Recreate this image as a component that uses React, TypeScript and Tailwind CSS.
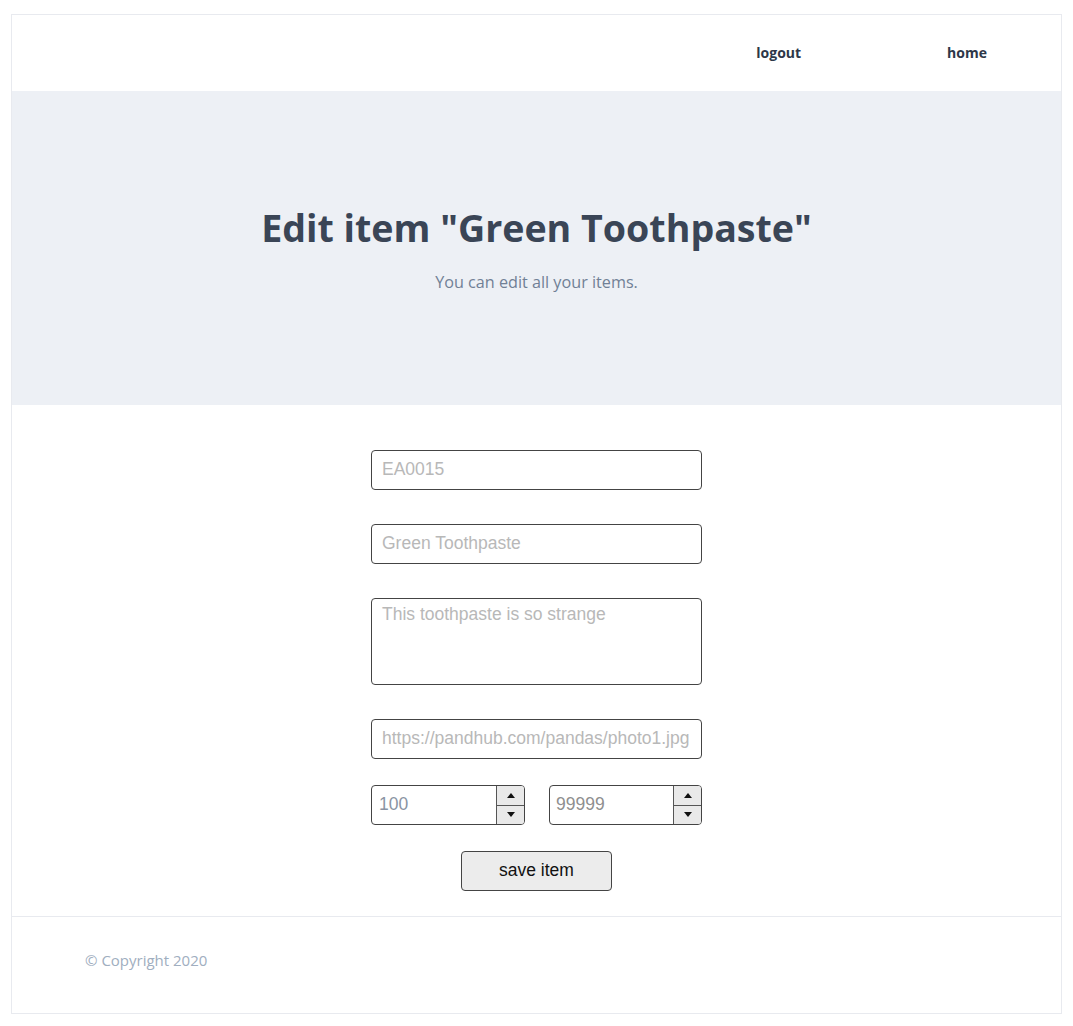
import React from "react";

function Spin() {
  return (
    <div className="flex w-[28px] flex-col border-l border-[#555] bg-[#e9e9e9]">
      <div className="flex flex-1 items-center justify-center border-b border-[#555]">
        <svg width="8" height="5" viewBox="0 0 8 5"><path d="M0 5 L4 0 L8 5 Z" fill="#111" /></svg>
      </div>
      <div className="flex flex-1 items-center justify-center">
        <svg width="8" height="5" viewBox="0 0 8 5"><path d="M0 0 L4 5 L8 0 Z" fill="#111" /></svg>
      </div>
    </div>
  );
}

export default function App() {
  const inputCls =
    "h-[40px] w-full rounded-[4px] border border-[#444] bg-white pl-[10px] pr-[4px] pb-[2px] text-[17.5px] text-[#333] placeholder:text-[#b8b8b8] outline-none";
  const arial = { fontFamily: '"Liberation Sans", Arial, sans-serif' };
  return (
    <div className="bg-white px-[11px] pb-[11px] pt-[14px]" style={{ fontFamily: '"Open Sans", sans-serif' }}>
      <div className="flex flex-col border border-[#e8eaef]">
        <header className="flex h-[76px] items-center justify-end pr-[74px]">
          <nav className="-mt-[2px] flex items-center gap-[146px] text-[14px] font-bold text-[#2d3748]">
            <a className="ml-[2px]">logout</a>
            <a>home</a>
          </nav>
        </header>
        <section className="flex h-[314px] flex-col items-center justify-center bg-[#edf0f5] pt-[4px]">
          <h1 className="text-[37.6px] font-bold leading-[44px] text-[#3a4556]">Edit item "Green Toothpaste"</h1>
          <p className="mt-[20px] text-[16.2px] text-[#718096]">You can edit all your items.</p>
        </section>
        <main className="flex flex-col items-center pb-[25px] pt-[45px]" style={arial}>
          <div className="flex w-[331px] flex-col">
            <input className={inputCls} placeholder="EA0015" style={arial} />
            <input className={inputCls + " mt-[34px]"} placeholder="Green Toothpaste" style={arial} />
            <textarea
              className="mt-[34px] h-[87px] w-full resize-none rounded-[4px] border border-[#444] bg-white px-[10px] pt-[4px] text-[17.5px] leading-[22px] text-[#333] outline-none placeholder:text-[#b8b8b8]"
              placeholder="This toothpaste is so strange"
              style={arial}
            />
            <input className={inputCls + " mt-[34px]"} placeholder="https://pandhub.com/pandas/photo1.jpg" style={arial} />
            <div className="mt-[26px] flex justify-between">
              <div className="flex h-[40px] w-[154px] overflow-hidden rounded-[4px] border border-[#444] bg-white">
                <div className="flex flex-1 items-center pb-[2px] pl-[7px] text-[17.5px] text-[#8a94a3]">100</div>
                <Spin />
              </div>
              <div className="flex h-[40px] w-[153px] overflow-hidden rounded-[4px] border border-[#444] bg-white">
                <div className="flex flex-1 items-center pb-[2px] pl-[6px] text-[17.5px] text-[#8f8f8f]">99999</div>
                <Spin />
              </div>
            </div>
            <div className="mt-[26px] flex justify-center">
              <button className="h-[40px] w-[151px] rounded-[4px] border border-[#444] bg-[#ececec] pb-[2px] text-[17.5px] text-[#111]" style={arial}>
                save item
              </button>
            </div>
          </div>
        </main>
        <footer className="flex h-[97px] items-center border-t border-[#e8eaef] pb-[10px] pl-[73px]">
          <p className="text-[15px] text-[#a0aec0]">© Copyright 2020</p>
        </footer>
      </div>
    </div>
  );
}
